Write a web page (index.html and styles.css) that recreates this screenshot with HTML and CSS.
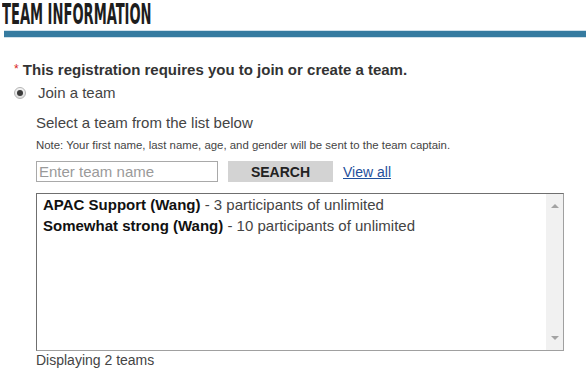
FILE: index.html
```html
<!DOCTYPE html>
<html lang="en">
  <head>
    <meta charset="UTF-8" />
    <title>Team Information</title>
    <link rel="stylesheet" href="styles.css">
  </head>
  <body>
    <div class="section">
      <h2 class="section-title"><span>TEAM INFORMATION</span></h2>
      <div class="section-rule"></div>

      <p class="required"><span class="star">*</span> This registration requires you to join or create a team.</p>

      <label class="choice">
        <span class="radio"><span class="dot"></span></span>
        Join a team
      </label>

      <div class="join">
        <p class="hint">Select a team from the list below</p>
        <p class="note">Note: Your first name, last name, age, and gender will be sent to the team captain.</p>

        <div class="search">
          <input class="search-input" type="text" placeholder="Enter team name" />
          <button class="search-btn">SEARCH</button>
          <a class="view-all" href="#">View all</a>
        </div>

        <div class="team-list">
          <ul class="teams">
            <li><b>APAC Support (Wang)</b> - 3 participants of unlimited</li>
            <li><b>Somewhat strong (Wang)</b> - 10 participants of unlimited</li>
          </ul>
          <div class="scrollbar">
            <span class="arrow up"></span>
            <span class="arrow down"></span>
          </div>
        </div>
        <p class="count">Displaying 2 teams</p>
      </div>
    </div>
  </body>
</html>
```

FILE: styles.css
```css
* {
  box-sizing: border-box;
}

body {
  margin: 0;
  font-family: "Liberation Sans", Arial, sans-serif;
  color: #333;
  background: #fff;
}

.section {
  padding-top: 1px;
}

.section-title {
  margin: 0;
  padding-left: 2px;
  font-family: "DejaVu Sans Condensed", "Liberation Sans", sans-serif;
  font-size: 28px;
  font-weight: bold;
  line-height: 28px;
  color: #1d1d1d;
  white-space: nowrap;
}

.section-title span {
  display: inline-block;
  transform: scaleX(0.52);
  transform-origin: left center;
}

.section-rule {
  margin-left: 4px;
  height: 8px;
  background: #367ba0;
  border-top: 1px solid #cfe0ea;
  border-bottom: 1px solid #cfe0ea;
  margin-top: 1px;
}

.required {
  margin: 23px 0 0 14px;
  font-size: 15px;
  font-weight: bold;
  color: #333;
}

.star {
  color: #d9251c;
  font-weight: normal;
  font-size: 12px;
  vertical-align: 2px;
}

.choice {
  display: flex;
  align-items: center;
  gap: 12px;
  margin: 6px 0 0 14px;
  font-size: 15px;
  color: #444;
}

.radio {
  width: 12px;
  height: 12px;
  border-radius: 50%;
  border: 1px solid #b5b5b5;
  background: linear-gradient(#f4f4f4, #dcdcdc);
  display: flex;
  align-items: center;
  justify-content: center;
}

.dot {
  width: 6px;
  height: 6px;
  border-radius: 50%;
  background: #3a3a3a;
}

.join {
  padding-left: 36px;
}

.hint {
  margin: 13px 0 0;
  font-size: 15px;
  color: #444;
}

.note {
  margin: 8px 0 0;
  font-size: 11.4px;
  color: #444;
}

.search {
  display: flex;
  align-items: center;
  margin-top: 10px;
}

.search-input {
  width: 182px;
  height: 21px;
  border: 1px solid #a9a9a9;
  padding: 0 2px;
  font-family: inherit;
  font-size: 15px;
  color: #333;
}

.search-input::placeholder {
  color: #9a9a9a;
}

.search-btn {
  margin-left: 10px;
  width: 105px;
  height: 21px;
  border: none;
  background: #d3d3d3;
  font-family: inherit;
  font-size: 14px;
  font-weight: bold;
  color: #222;
}

.view-all {
  margin-left: 10px;
  font-size: 14px;
  color: #1f4f9c;
}

.team-list {
  display: flex;
  margin-top: 11px;
  width: 528px;
  height: 158px;
  border: 1px solid #6f6f6f;
  border-right-color: #a0a0a0;
  border-bottom-color: #a0a0a0;
}

.teams {
  flex: 1;
  list-style: none;
  margin: 0;
  padding: 0 6px;
  font-size: 15px;
  color: #444;
}

.teams li {
  line-height: 21px;
}

.teams b {
  color: #111;
}

.scrollbar {
  width: 17px;
  background: #f1f1f1;
  display: flex;
  flex-direction: column;
  justify-content: space-between;
  align-items: center;
  padding: 10px 0;
}

.arrow {
  width: 0;
  height: 0;
  border-left: 4px solid transparent;
  border-right: 4px solid transparent;
}

.arrow.up {
  border-bottom: 4px solid #a3a3a3;
}

.arrow.down {
  border-top: 4px solid #a3a3a3;
}

.count {
  margin: 1px 0 0;
  font-size: 14px;
  line-height: 16px;
  color: #444;
}
```
